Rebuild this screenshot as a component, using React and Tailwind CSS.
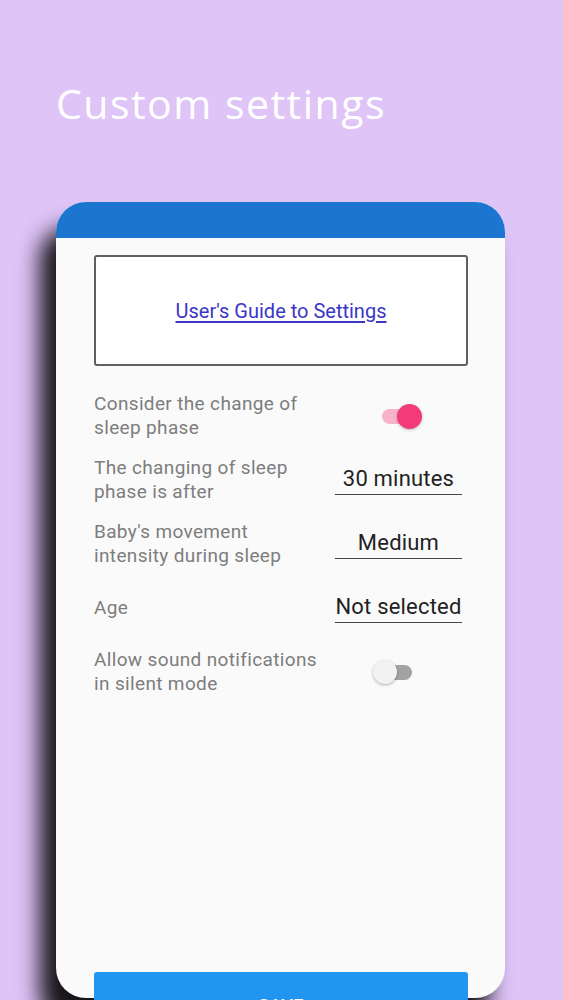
import React from "react";

function Row({ label, children }) {
  return (
    <div className="flex h-[48px] items-center">
      <div className="w-[241px] shrink-0 whitespace-nowrap text-[19px] leading-[24px] tracking-[0.35px] text-[#7d7d7d]">{label}</div>
      <div className="w-[127px] h-full flex items-center">{children}</div>
    </div>
  );
}

function Value({ text }) {
  return (
    <div className="w-[127px] border-b-[1.5px] border-[#444] text-center text-[22px] leading-[28px] tracking-[0.2px] text-[#222] pb-[1px] whitespace-nowrap">
      {text}
    </div>
  );
}

function Toggle({ on }) {
  return on ? (
    <div className="relative ml-[47px] w-[38px] h-[15px] rounded-full bg-[#f8b3cb]">
      <div className="absolute right-[-2px] top-[-5px] w-[25px] h-[25px] rounded-full bg-[#f23b78] shadow-[0_1px_3px_rgba(0,0,0,0.25)]" />
    </div>
  ) : (
    <div className="relative ml-[39px] w-[38px] h-[15px] rounded-full bg-[#a3a3a3]">
      <div className="absolute left-[-1px] top-[-5px] w-[24px] h-[24px] rounded-full bg-[#f2f2f2] shadow-[0_1px_3px_rgba(0,0,0,0.3)]" />
    </div>
  );
}

export default function App() {
  return (
    <div
      className="h-[1000px] w-[563px] overflow-hidden bg-[#dfc4f8]"
      style={{ fontFamily: "Roboto, 'Liberation Sans', sans-serif" }}
    >
      <h1
        className="pl-[56px] pt-[78px] text-[41px] leading-[50px] tracking-[1.5px] text-white"
        style={{ fontFamily: "'Open Sans', Lato, sans-serif" }}
      >
        Custom settings
      </h1>
      <div className="ml-[56px] mt-[74px] w-[449px] h-[796px] rounded-[30px] bg-[#fafafa] shadow-[-16px_26px_22px_rgba(0,0,0,0.9)] flex flex-col">
        <div className="h-[36px] rounded-t-[30px] bg-[#1c76d0]" />
        <div className="flex flex-col flex-1 pl-[38px] pr-[37px] pt-[17px]">
          <div className="h-[111px] border-2 border-[#606060] rounded-[3px] bg-white flex items-center justify-center">
            <span className="text-[20px] text-[#3a36c8] underline underline-offset-[3px]">
              User's Guide to Settings
            </span>
          </div>
          <div className="mt-[26px] flex flex-col gap-[16px]">
            <Row label={<>Consider the change of<br />sleep phase</>}>
              <Toggle on />
            </Row>
            <Row label={<>The changing of sleep<br />phase is after</>}>
              <Value text="30 minutes" />
            </Row>
            <Row label={<>Baby's movement<br />intensity during sleep</>}>
              <Value text="Medium" />
            </Row>
            <Row label="Age">
              <Value text="Not selected" />
            </Row>
            <Row label={<>Allow sound notifications<br />in silent mode</>}>
              <Toggle on={false} />
            </Row>
          </div>
          <div className="mt-auto mb-[-26px] h-[52px] rounded-[3px] bg-[#2196f0] flex items-start justify-center pt-[20px]">
            <span className="text-[18px] font-medium tracking-wide text-white">SAVE</span>
          </div>
        </div>
      </div>
    </div>
  );
}
